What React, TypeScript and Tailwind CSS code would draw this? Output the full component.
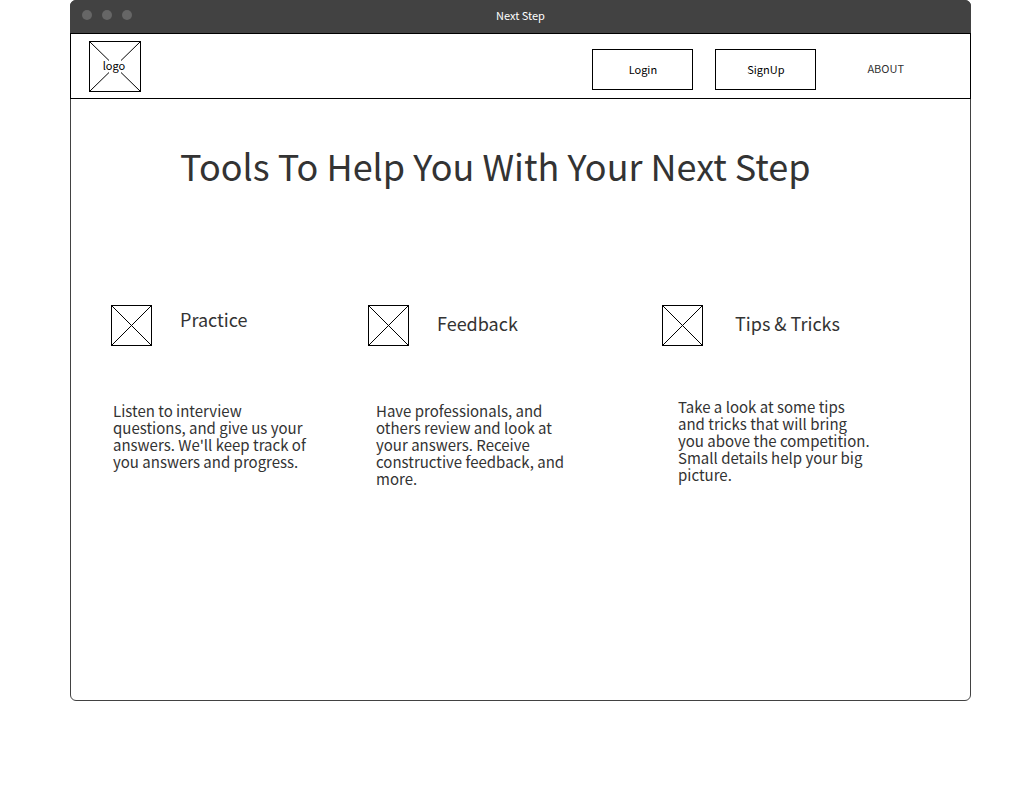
type Feature = {
  title: string;
  text: string;
  headClass: string;
  titleClass: string;
  textClass: string;
};

const features: Feature[] = [
  {
    title: "Practice",
    text: "Listen to interview questions, and give us your answers. We'll keep track of you answers and progress.",
    headClass: "gap-7",
    titleClass: "mt-0",
    textClass: "ml-0.5 mt-14",
  },
  {
    title: "Feedback",
    text: "Have professionals, and others review and look at your answers. Receive constructive feedback, and more.",
    headClass: "gap-7",
    titleClass: "mt-1",
    textClass: "ml-2 mt-14",
  },
  {
    title: "Tips & Tricks",
    text: "Take a look at some tips and tricks that will bring you above the competition. Small details help your big picture.",
    headClass: "gap-8",
    titleClass: "mt-1",
    textClass: "ml-4 mt-13",
  },
];

function Placeholder() {
  return (
    <svg viewBox="0 0 41 41" className="size-[41px] shrink-0" fill="none" stroke="#000" aria-hidden="true">
      <rect x="0.5" y="0.5" width="40" height="40" />
      <path d="M0.5 0.5 40.5 40.5M40.5 0.5 0.5 40.5" shapeRendering="crispEdges" />
    </svg>
  );
}

function Logo() {
  return (
    <div className="relative flex size-13 items-center justify-center">
      <svg viewBox="0 0 52 51" className="absolute inset-x-0 top-0 h-[51px] w-[52px]" fill="none" stroke="#000" aria-hidden="true">
        <rect x="0.5" y="0.5" width="51" height="50" />
        <path d="M0.5 0.5 20 19.5M32 19.5 51.5 0.5M0.5 50.5 20 31.5M32 31.5 51.5 50.5" />
      </svg>
      <span className="relative mr-0.5 mb-1 text-[11px] leading-4 text-black">logo</span>
    </div>
  );
}

export default function App() {
  return (
    <div className="bg-white pr-[50px] pb-[109px] pl-[70px] font-['Noto_Sans_CJK_SC','Noto_Sans',sans-serif] text-[#333333]">
      <div className="flex min-h-[701px] flex-col rounded-md border border-[#424242]">
        <header className="-mx-px -mt-px grid h-[33px] grid-cols-3 items-center rounded-t-md bg-[#424242] pb-1">
          <div className="flex gap-2.5 pl-3">
            <span className="size-2.5 rounded-full bg-[#666666]" />
            <span className="size-2.5 rounded-full bg-[#666666]" />
            <span className="size-2.5 rounded-full bg-[#666666]" />
          </div>
          <span className="text-center text-[11px] leading-4 text-white">Next Step</span>
        </header>

        <nav className="-mx-px flex h-[66px] items-start border border-black pt-[7px] pr-[66px] pl-[18px]">
          <Logo />
          <div className="mt-2 ml-auto flex items-center">
            <button type="button" className="h-[41px] w-[101px] border border-black pb-0.5 text-[11px] leading-4 text-black">
              Login
            </button>
            <button type="button" className="ml-[22px] h-[41px] w-[101px] border border-black pb-0.5 text-[11px] leading-4 text-black">
              SignUp
            </button>
            <a href="#about" className="ml-[51px] pb-1 text-[11px] leading-4">
              ABOUT
            </a>
          </div>
        </nav>

        <main className="pt-[38px]">
          <h1 className="pl-[109px] text-4xl leading-14">Tools To Help You With Your Next Step</h1>
          <div className="mt-28 grid grid-cols-[257fr_294fr_308fr] pl-10">
            {features.map((f) => (
              <section key={f.title}>
                <div className={`flex items-start ${f.headClass}`}>
                  <Placeholder />
                  <h2 className={`text-lg leading-7 ${f.titleClass}`}>{f.title}</h2>
                </div>
                <p className={`w-[196px] text-[15px] leading-[17px] ${f.textClass}`}>{f.text}</p>
              </section>
            ))}
          </div>
        </main>
      </div>
    </div>
  );
}
